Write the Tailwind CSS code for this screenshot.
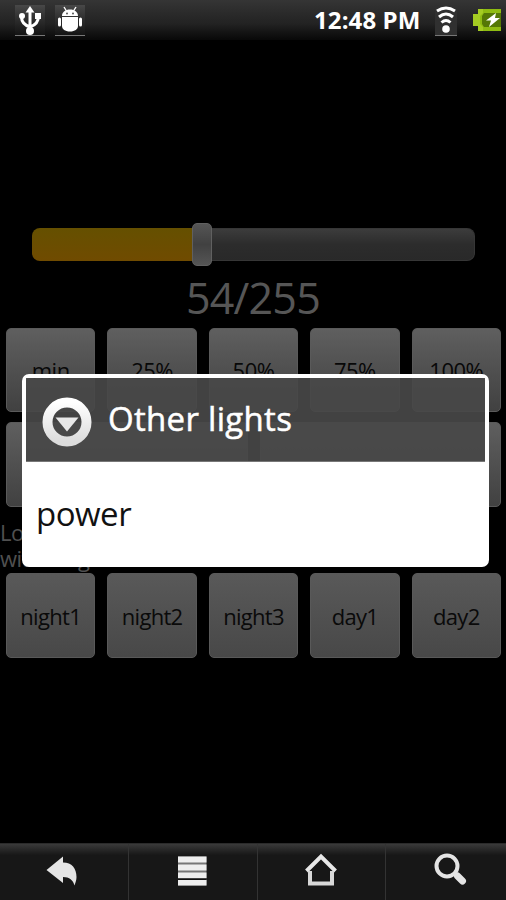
<!DOCTYPE html>
<html lang="en">

<head>
  <meta charset="UTF-8">
  <meta name="viewport" content="width=device-width, initial-scale=1.0">
  <script src="https://cdn.jsdelivr.net/npm/@tailwindcss/browser@4"></script>
  <title>Lights</title>
</head>

<body class="bg-black">
  <div class="relative flex flex-col w-[506px] h-[900px] overflow-hidden bg-black font-['Open_Sans','Noto_Sans',sans-serif]">

    <!-- Status bar -->
    <header class="flex items-center h-[40px] bg-linear-to-b from-[#353535] via-[#222222] via-60% to-[#080808] text-white">
      <div class="ml-[15px] w-[30px] h-[31px] bg-linear-to-b from-[#484848] to-[#141414] border-b border-[#777] flex justify-center">
        <svg width="24" height="30" viewBox="0 0 24 30" fill="none" stroke="#fff" stroke-width="3">
          <path d="M12 5v20M12 22C6 20 3.500 17 3.500 12M12 22C18 20 20.500 17 20.500 11" />
          <path d="M12 1l4.500 6.500h-9z" fill="#fff" stroke="none" />
          <circle cx="12" cy="26" r="4" fill="#fff" stroke="none" />
          <circle cx="4" cy="11" r="3" fill="#fff" stroke="none" />
          <path d="M17 8h6v6h-6z" fill="#fff" stroke="none" />
        </svg>
      </div>
      <div class="ml-[10px] w-[30px] h-[31px] bg-linear-to-b from-[#484848] to-[#141414] border-b border-[#777] flex justify-center">
        <svg width="26" height="30" viewBox="0 0 26 30" fill="#fff">
          <path d="M5 11C5 7 8.500 4.500 13 4.500S21 7 21 11zM5 12h16v9c0 3-3 5.500-8 5.500S5 24 5 21z" />
          <rect x="1" y="12.500" width="3" height="9" rx="1.500" />
          <rect x="22" y="12.500" width="3" height="9" rx="1.500" />
          <path d="M7 2l2.500 4M19 2l-2.500 4" stroke="#fff" stroke-width="1.400" />
          <circle cx="10" cy="8.500" r="1" fill="#555" />
          <circle cx="16" cy="8.500" r="1" fill="#555" />
        </svg>
      </div>
      <span class="ml-auto w-[107px] text-[24px] leading-[40px] font-bold whitespace-nowrap tracking-[0.1px]">12:48 PM</span>
      <div class="ml-[14px] w-[22px] h-[31px] bg-[#303030] border-b border-[#777] flex justify-center">
        <svg width="22" height="30" viewBox="0 0 22 30" fill="none" stroke="#fff" stroke-width="3">
          <path d="M2 6Q11 0 20 6M4 12Q11 6 18 12M6.500 17.500Q11 13.500 15.500 17.500" />
          <circle cx="11" cy="24" r="3.800" fill="#fff" stroke="none" />
        </svg>
      </div>
      <svg class="ml-[15px]" width="34" height="26" viewBox="0 0 34 26">
        <path d="M6 2h23v22H6v-5H1V7h5z" fill="#8fbc12" />
        <path d="M12 6h17v14H12l-2-3V9z" fill="#557806" />
        <path d="M6 2h5v4L8 9v8l3 3v4H6v-5H1V7h5z" fill="#a5cc23" />
        <path d="M24 6l-10 7.500h5l-2 6.500 11-9h-5z" fill="#fff" />
      </svg>
    </header>

    <!-- Brightness screen, dimmed behind the dialog -->
    <main class="flex flex-col h-[803px] pt-[183px]">
      <div class="flex items-center h-[43px] ml-[32px] w-[443px]">
        <div class="w-[160px] h-[33px] rounded-l-[8px] bg-linear-to-b from-[#655000] to-[#704b00]"></div>
        <div class="w-[20px] h-[43px] rounded-[5px] border border-[#606060] bg-linear-to-b from-[#555] via-[#414141] to-[#555]"></div>
        <div class="w-[263px] h-[33px] rounded-r-[8px] bg-linear-to-b from-[#3c3c3c] via-[#2c2c2c] to-[#292929] border-y border-r border-[#363636]"></div>
      </div>

      <p class="h-[62px] text-center text-[43px] leading-[63px] tracking-[-0.8px] text-[#565656]">54/255</p>

      <div class="grid grid-cols-5 gap-x-[12px] px-[6px] pr-[5px] text-[22px] tracking-[-0.5px] text-center text-[#080808]">
        <div class="h-[84px] rounded-[5px] bg-linear-to-b from-[#5f5f5f] to-[#414141] border border-[#5a5a5a] leading-[82px]">min</div>
        <div class="h-[84px] rounded-[5px] bg-linear-to-b from-[#5f5f5f] to-[#414141] border border-[#5a5a5a] leading-[82px]">25%</div>
        <div class="h-[84px] rounded-[5px] bg-linear-to-b from-[#5f5f5f] to-[#414141] border border-[#5a5a5a] leading-[82px]">50%</div>
        <div class="h-[84px] rounded-[5px] bg-linear-to-b from-[#5f5f5f] to-[#414141] border border-[#5a5a5a] leading-[82px]">75%</div>
        <div class="h-[84px] rounded-[5px] bg-linear-to-b from-[#5f5f5f] to-[#414141] border border-[#5a5a5a] leading-[82px]">100%</div>
      </div>

      <div class="grid grid-cols-2 gap-x-[12px] px-[6px] pr-[5px] mt-[10px]">
        <div class="h-[85px] rounded-[5px] bg-linear-to-b from-[#5f5f5f] to-[#414141] border border-[#5a5a5a]"></div>
        <div class="h-[85px] rounded-[5px] bg-linear-to-b from-[#5f5f5f] to-[#414141] border border-[#5a5a5a]"></div>
      </div>

      <p class="h-[66px] pt-[12px] text-[22px] leading-[26px] tracking-[-0.5px] text-[#505050]">Lo<br>with long</p>

      <div class="grid grid-cols-5 gap-x-[12px] px-[6px] pr-[5px] text-[22px] tracking-[-0.7px] text-center text-[#0a0a0a]">
        <div class="h-[85px] rounded-[5px] bg-linear-to-b from-[#595959] to-[#484848] border border-[#595959] leading-[84px]">night1</div>
        <div class="h-[85px] rounded-[5px] bg-linear-to-b from-[#595959] to-[#484848] border border-[#595959] leading-[84px]">night2</div>
        <div class="h-[85px] rounded-[5px] bg-linear-to-b from-[#595959] to-[#484848] border border-[#595959] leading-[84px]">night3</div>
        <div class="h-[85px] rounded-[5px] bg-linear-to-b from-[#595959] to-[#484848] border border-[#595959] leading-[84px]">day1</div>
        <div class="h-[85px] rounded-[5px] bg-linear-to-b from-[#595959] to-[#484848] border border-[#595959] leading-[84px]">day2</div>
      </div>
    </main>

    <!-- Bottom keys -->
    <nav class="grid grid-cols-[129px_129px_128px_120px] h-[57px] bg-linear-to-b from-[#3a3a3a] via-[#171717] via-20% to-[#171717] border-t border-[#2b2b2b]">
      <div class="border-r border-[#333]">
        <svg width="128" height="56" viewBox="0 0 128 56">
          <path d="M46.500 26L63 12.500v6c9 0 13.500 6 13.500 14.500 0 3-1 5.500-2 8.500-1.500-5.500-5-8.500-11.500-8.500v6z" fill="#e4e4e4" />
        </svg>
      </div>
      <div class="border-r border-[#333]">
        <svg width="128" height="56" viewBox="0 0 128 56">
          <path d="M49 12.500h28.500v29H49z" fill="#777" />
          <path d="M49 12.500h28.500v6H49zM49 20.500h28.500v6H49zM49 28.500h28.500v5.500H49zM49 36h28.500v5.500H49z" fill="#eee" />
          <path d="M49 34.500h28.500v1.500H49z" fill="#111" />
        </svg>
      </div>
      <div class="border-r border-[#333]">
        <svg width="127" height="56" viewBox="0 0 127 56" fill="none" stroke="#e8e8e8">
          <path d="M48.500 27L63 12.500 77.500 27" stroke-width="4" />
          <path d="M52 27v12.500h22V27" stroke-width="4" stroke="#d8d8d8" />
        </svg>
      </div>
      <div>
        <svg width="120" height="56" viewBox="0 0 120 56" fill="none" stroke="#e4e4e4">
          <circle cx="61" cy="22" r="10.500" stroke-width="4" />
          <path d="M69 30l3 3" stroke-width="4" />
          <path d="M71.500 32l5 5" stroke-width="7" stroke-linecap="round" />
        </svg>
      </div>
    </nav>

    <!-- Dialog -->
    <section class="absolute left-[22px] top-[374px] w-[467px] h-[193px] rounded-[7px] border-4 border-white flex flex-col">
      <div class="flex items-center h-[84px] shrink-0 bg-[#484848]/92 border-b border-[#777]">
        <svg class="ml-[16px] mt-[4px]" width="50" height="50" viewBox="0 0 50 50">
          <defs>
            <linearGradient id="ring" x1="0" y1="0" x2="0" y2="1">
              <stop offset="0" stop-color="#fff" />
              <stop offset="1" stop-color="#dcdcdc" />
            </linearGradient>
          </defs>
          <circle cx="25" cy="25" r="19.500" fill="none" stroke="url(#ring)" stroke-width="10" />
          <path d="M13.500 20.500h23L25 34.500z" fill="#e8e8e8" />
        </svg>
        <h1 class="ml-[16px] text-[33px] leading-[40px] tracking-[0.3px] text-white mt-[-2px] [-webkit-text-stroke:0.5px_white]">Other lights</h1>
      </div>
      <div class="flex-1 bg-white flex items-center">
        <span class="ml-[10px] mt-[2px] text-[33px] leading-[40px] tracking-[-0.5px] text-[#111]">power</span>
      </div>
    </section>

  </div>
</body>

</html>
